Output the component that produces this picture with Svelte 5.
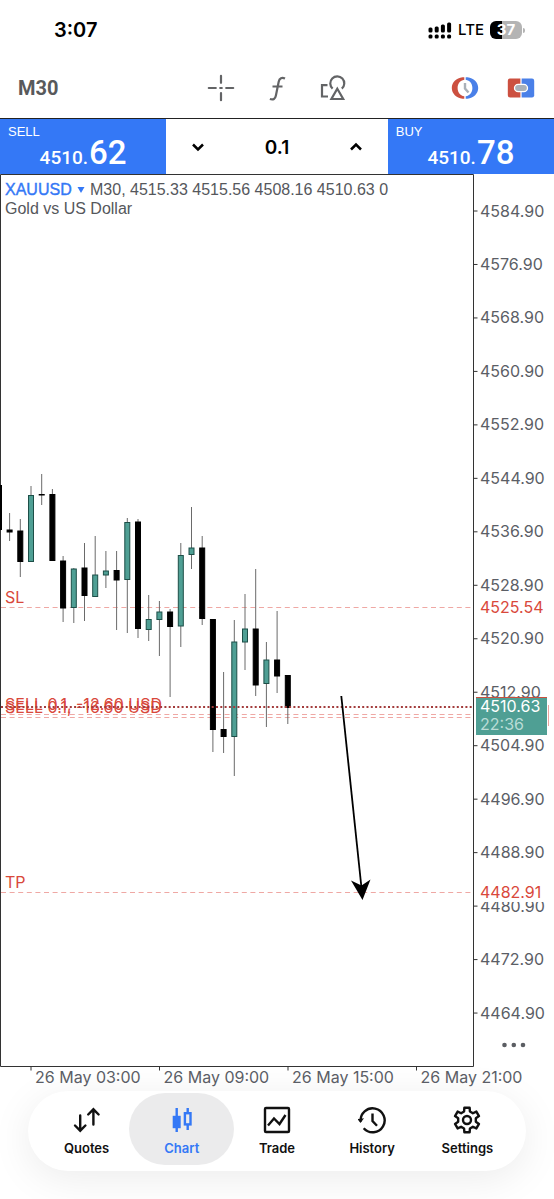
<script>
	const gear = gearPoints(14, 14, 12.6, 9);

	const tabs = [
		{ id: 'quotes', label: 'Quotes' },
		{ id: 'chart', label: 'Chart' },
		{ id: 'trade', label: 'Trade' },
		{ id: 'history', label: 'History' },
		{ id: 'settings', label: 'Settings' }
	];

	let active = $state('chart');
	let volume = $state('0.1');

	function step(delta) {
		const next = Math.max(0.1, (parseFloat(volume) || 0) + delta);
		volume = next.toFixed(1);
	}

	// plot geometry, in viewBox units
	const plot = { right: 473.5, bottom: 1066.5 };
	const firstPrice = 4584.9;
	const priceStep = 8;
	const rowHeight = 53.47;
	const prices = Array.from({ length: 16 }, (_, i) => ({
		y: 211 + i * rowHeight,
		text: (firstPrice - i * priceStep).toFixed(2)
	}));

	const times = [
		{ x: 31, text: '26 May 03:00' },
		{ x: 159.5, text: '26 May 09:00' },
		{ x: 288, text: '26 May 15:00' },
		{ x: 416.5, text: '26 May 21:00' }
	];

	// [wick top, wick bottom, body top, body bottom, rising]
	const candles = [
		[513, 541, 530, 532, 0],
		[519, 577, 531, 561.5, 0],
		[486, 562, 495.5, 561.5, 1],
		[474, 505, 494.5, 495, 0],
		[489, 561, 494.5, 560.5, 0],
		[556, 622, 561, 608, 0],
		[568, 623, 569, 607.5, 1],
		[543, 621, 568, 595.5, 0],
		[536, 597, 575, 596.5, 1],
		[551, 588, 571, 575, 1],
		[551, 630, 570.5, 580, 0],
		[518, 633, 522.5, 579.5, 1],
		[519, 638, 522, 628.5, 0],
		[595, 641, 619.5, 629.5, 1],
		[601, 656, 612, 619.5, 1],
		[609, 697, 612, 626.5, 0],
		[543, 647, 555.5, 626, 1],
		[507, 569, 548, 554.5, 1],
		[536, 625, 548, 618.5, 0],
		[619, 752, 619.5, 729.5, 0],
		[672, 753, 729.5, 736.5, 0],
		[620, 776, 642, 736.5, 1],
		[594, 670, 629, 642, 1],
		[569, 696, 629, 685, 0],
		[642, 727, 660, 683.5, 1],
		[611, 693, 660, 676, 0],
		[675, 724, 675.5, 707.5, 0]
	];
	const candleX = (i) => 9.6 + i * 10.7;

	function gearPoints(cx, cy, outer, inner) {
		const pts = [];
		for (let i = 0; i < 6; i++) {
			const mid = -90 + i * 60;
			for (const [off, r] of [[-19, inner], [-12, outer], [12, outer], [19, inner]]) {
				const a = ((mid + off) * Math.PI) / 180;
				pts.push(`${(cx + r * Math.cos(a)).toFixed(2)},${(cy + r * Math.sin(a)).toFixed(2)}`);
			}
		}
		return pts.join(' ');
	}
</script>

<div class="app">
	<header class="status">
		<span class="clock">3:07</span>
		<div class="radios">
			<svg class="signal" viewBox="0 0 24 18" aria-hidden="true">
				<rect x="0.5" y="6.5" width="4" height="5" rx="1.5" />
				<rect x="6.7" y="5.5" width="4" height="6" rx="1.5" />
				<rect x="12.9" y="3.5" width="4" height="8" rx="1.5" />
				<rect x="19.1" y="1.5" width="4" height="10" rx="1.5" />
				<rect x="0.5" y="13.5" width="4" height="4" rx="1.5" />
				<rect x="6.7" y="13.5" width="4" height="4" rx="1.5" />
				<rect x="12.9" y="13.5" width="4" height="4" rx="1.5" />
				<rect x="19.1" y="13.5" width="4" height="4" rx="1.5" />
			</svg>
			<span class="lte">LTE</span>
			<span class="battery"><span class="cell">37</span></span>
		</div>
	</header>

	<div class="toolbar">
		<button class="timeframe">M30</button>
		<div class="tools">
			<button aria-label="Crosshair">
				<svg viewBox="0 0 28 28" class="line">
					<path d="M14 1.8v7M14 19.200v7M1.800 14h7M19.200 14h7M13.200 14h1.600" stroke-linecap="round" />
				</svg>
			</button>
			<button aria-label="Indicators">
				<svg viewBox="0 0 28 28" class="line">
					<path d="M22 4.500c-3-1.400-5.600-.4-6.300 3.200L12.900 21.500c-.6 3.300-2.600 4.700-6 3.500M9.500 12.500h10" />
				</svg>
			</button>
			<button aria-label="Objects">
				<svg viewBox="0 0 28 28" class="line">
					<path d="M8.500 11.200H3v11.300h6" />
					<path d="M13.600 14.600A7 7 0 1 1 22.800 14.700" />
					<path d="M18.300 14.800L24.200 25H12.400z" />
				</svg>
			</button>
		</div>
		<div class="actions">
			<button aria-label="Sessions">
				<svg viewBox="0 0 28 28">
					<path fill="#cc5040" d="M13.300 3.300H11.500C5.300 4 .8 8.500 .8 14s4.500 10 10.700 10.700h1.800v-2.400C9 21.500 6.600 18.300 6.600 14S9 6.500 13.300 5.700z" />
					<path fill="#4a80e8" d="M14.700 3.300h1.800C22.700 4 27.200 8.500 27.200 14s-4.500 10-10.700 10.700h-1.800v-2.400C19 21.500 21.400 18.300 21.400 14S19 6.500 14.700 5.700z" />
					<path d="M14 9v5.500l3.500 4" fill="none" stroke="#a9b0b8" stroke-width="2.400" />
				</svg>
			</button>
			<button aria-label="One click trading">
				<svg viewBox="0 0 28 28">
					<path fill="#cc5040" d="M13.400 4.600H3a2.200 2.200 0 0 0-2.200 2.200v14.400A2.200 2.200 0 0 0 3 23.400h10.400z" />
					<path fill="#4a80e8" d="M14.600 4.600H25a2.200 2.200 0 0 1 2.200 2.200v14.400a2.200 2.200 0 0 1-2.200 2.200H14.600z" />
					<rect x="7.500" y="10.300" width="13" height="7.400" rx="3.700" fill="#a9b0b8" stroke="#fff" stroke-width="1.300" />
				</svg>
			</button>
		</div>
	</div>

	<div class="panel">
		<button class="deal">
			<span class="side">SELL</span>
			<span class="quote">4510.<b>62</b></span>
		</button>
		<div class="volume">
			<button aria-label="Decrease volume" onclick={() => step(-0.1)}>
				<svg viewBox="0 0 14 14"><path d="M2 4.500l5 5 5-5" /></svg>
			</button>
			<input aria-label="Volume" inputmode="decimal" bind:value={volume} />
			<button aria-label="Increase volume" onclick={() => step(0.1)}>
				<svg viewBox="0 0 14 14"><path d="M2 9.500l5-5 5 5" /></svg>
			</button>
		</div>
		<button class="deal">
			<span class="side">BUY</span>
			<span class="quote">4510.<b>78</b></span>
		</button>
	</div>

	<main>
		<svg class="chart" viewBox="0 174 554 917" role="img" aria-label="XAUUSD M30 chart">
			<!-- frame -->
			<path class="frame" d="M0.500 174.500V1066.500H473.500V174.500z" />

			<text class="title symbol" x="5" y="195">XAUUSD</text>
			<path d="M77.500 187h7l-3.500 6z" fill="#3478f6" />
			<text class="title" x="90" y="195">M30, 4515.33 4515.56 4508.16 4510.63 0</text>
			<text class="title" x="5" y="214">Gold vs US Dollar</text>

			<!-- order levels -->
			<path class="level" d="M1 607.500H473M1 714.500H473M1 717.500H473M1 892.500H473" />

			<!-- candles -->
			<rect x="0" y="485" width="2" height="45" />
			{#each candles as [high, low, top, bottom, up], i}
				<line class="wick" x1={candleX(i)} x2={candleX(i)} y1={high} y2={low} />
				<rect
					class="body"
					class:up
					x={candleX(i) - 2.5}
					y={top}
					width="5"
					height={bottom - top}
				/>
			{/each}

			<text class="order" x="5" y="603">SL</text>
			<text class="order" x="5" y="888">TP</text>
			<text class="order" x="5" y="710">SELL 0.1, -12.60 USD</text>
			<text class="order" x="5" y="713">SELL 0.1, -16.60 USD</text>
			<path class="bid" d="M1 707H473" />

			<!-- price scale -->
			{#each prices as p}
				<line class="tick" x1={plot.right} x2={plot.right + 4} y1={p.y} y2={p.y} />
				<text class="scale" x="480" y={p.y + 5.5}>{p.text}</text>
			{/each}
			<rect x="479" y="600" width="75" height="15" fill="#fff" />
			<text class="scale stop" x="480" y="613">4525.54</text>
			<rect x="479" y="886" width="75" height="16" fill="#fff" />
			<text class="scale stop" x="480" y="898">4482.91</text>
			<path d="M548.500 705V726" stroke="#eda49e" />
			<rect x="476" y="697" width="71" height="38" fill="#4f9f94" />
			<path d="M476 697.500H547" stroke="#c9503f" />
			<text class="scale now" x="480" y="712">4510.63</text>
			<text class="scale left" x="480" y="730">22:36</text>

			<!-- time scale -->
			{#each times as t}
				<line class="tick" x1={t.x} x2={t.x} y1={plot.bottom} y2={plot.bottom + 4} />
				<text class="scale" x={t.x + 4} y="1083">{t.text}</text>
			{/each}

			<!-- drawn arrow -->
			<path d="M341.300 696L361.500 888" stroke="#000" stroke-width="1.800" />
			<path d="M351 880.500l10.500 5 9-6L362.500 900z" />

			<g fill="#5b5e63">
				<circle cx="504.500" cy="1045" r="2.300" />
				<circle cx="513.800" cy="1045" r="2.300" />
				<circle cx="523" cy="1045" r="2.300" />
			</g>
		</svg>
	</main>

	<nav>
		{#each tabs as tab}
			<button class:active={active === tab.id} onclick={() => (active = tab.id)}>
				<svg viewBox="0 0 28 28" aria-hidden="true">
					{#if tab.id === 'quotes'}
						<path d="M7.200 9.500V24M2 19.500l5.200 5.200 5.200-5.200M20.400 18.500V4M15.200 8.500l5.200-5.200 5.200 5.200" stroke-linecap="round" />
					{:else if tab.id === 'chart'}
						<path d="M8.700 2v24M19.700 2v5M19.700 19v5" />
						<rect x="5.900" y="11" width="5.600" height="10" class="solid" />
						<rect x="16.900" y="7.200" width="5.600" height="11.200" />
					{:else if tab.id === 'trade'}
						<rect x="2" y="2" width="24" height="24" rx="1" />
						<path d="M5 19.500l6-7 5.500 5.500 6-9" />
					{:else if tab.id === 'history'}
						<path d="M2.700 15.500A12 12 0 1 1 5.700 22.300" />
						<path d="M-.5 13l6.500-.8-3.500 4.800z" class="solid" stroke="none" />
						<path d="M14.500 7.500v7.500l4.500 4.800" />
					{:else}
						<polygon points={gear} stroke-linejoin="round" />
						<circle cx="14" cy="14" r="4" />
					{/if}
				</svg>
				<span>{tab.label}</span>
			</button>
		{/each}
	</nav>
</div>

<style>
	:global(body) {
		margin: 0;
		background: #fff;
		color: #000;
		font-family: Inter, 'Liberation Sans', sans-serif;
	}

	.app {
		min-height: 100vh;
		overflow: hidden;
	}

	button {
		margin: 0;
		padding: 0;
		border: 0;
		background: none;
		color: inherit;
		font: inherit;
		cursor: pointer;
	}

	.status {
		display: flex;
		justify-content: space-between;
		align-items: center;
		height: 60px;
		padding: 0 29px 0 54px;
	}
	.clock {
		font-size: 20px;
		font-weight: 600;
	}
	.radios {
		display: flex;
		align-items: center;
		gap: 6px;
	}
	.signal {
		width: 24px;
		height: 18px;
	}
	.lte {
		font-size: 15px;
		font-weight: 500;
		line-height: 18px;
	}
	.battery {
		display: flex;
		align-items: center;
		gap: 1px;
	}
	.battery::after {
		content: '';
		width: 2px;
		height: 5px;
		border-radius: 0 2px 2px 0;
		background: #b4b4b4;
	}
	.cell {
		width: 32px;
		border-radius: 6px;
		background: linear-gradient(to right, #000 37%, #b4b4b4 37%);
		color: #fff;
		font-size: 15px;
		font-weight: 700;
		line-height: 18px;
		text-align: center;
	}

	.toolbar {
		display: grid;
		grid-template-columns: 1fr auto 1fr;
		align-items: center;
		height: 58px;
		padding: 0 19px 2px 18px;
		box-sizing: border-box;
		color: #58595b;
	}
	.toolbar svg {
		display: block;
		width: 28px;
		height: 28px;
	}
	.line {
		fill: none;
		stroke: #636466;
		stroke-width: 2.2;
	}
	.timeframe {
		justify-self: start;
		font-family: Roboto, sans-serif;
		font-size: 20px;
		font-weight: 700;
	}
	.tools,
	.actions {
		display: flex;
		gap: 28px;
	}
	.actions {
		justify-self: end;
	}

	.panel {
		display: grid;
		grid-template-columns: 3fr 4fr 3fr;
		height: 56px;
		box-sizing: border-box;
		border-top: 1px solid #222;
	}
	.deal {
		display: flex;
		flex-direction: column;
		padding: 5px 8px 0;
		background: #3478f6;
		color: #fff;
		text-align: left;
	}
	.side {
		font: 13px/15px 'Liberation Sans', sans-serif;
	}
	.quote {
		align-self: center;
		font-family: Roboto, sans-serif;
		font-size: 19px;
		font-weight: 500;
		line-height: 28px;
	}
	.quote b {
		margin-left: 1px;
		font-size: 33px;
		font-weight: 500;
	}
	.volume {
		display: flex;
		justify-content: space-between;
		align-items: center;
		padding: 0 25px;
	}
	.volume svg {
		display: block;
		width: 14px;
		height: 14px;
		fill: none;
		stroke: #000;
		stroke-width: 2.5;
	}
	.volume input {
		width: 60px;
		padding: 2px 0 0;
		border: 0;
		background: none;
		color: #000;
		font: 600 19px/24px Inter, sans-serif;
		text-align: center;
	}

	.chart {
		display: block;
		width: 100%;
		height: auto;
	}
	.frame {
		fill: none;
		stroke: #333;
	}
	.title {
		fill: #55575c;
		font: 16px 'Liberation Sans', Arial, sans-serif;
	}
	.symbol {
		fill: #3478f6;
		stroke: #3478f6;
		stroke-width: 0.4;
	}
	.scale {
		fill: #5b5e66;
		font: 16px Inter, sans-serif;
	}
	.stop {
		fill: #d9483b;
	}
	.now {
		fill: #fff;
	}
	.left {
		fill: #b9dcd6;
	}
	.order {
		fill: #d9483b;
		font: 16px Inter, sans-serif;
	}
	.level {
		fill: none;
		stroke: #efa8a4;
		stroke-dasharray: 5 3.6;
	}
	.bid {
		fill: none;
		stroke: #a33c3c;
		stroke-width: 2;
		stroke-dasharray: 2 2.3;
	}
	.tick {
		stroke: #333;
	}
	.wick {
		stroke: #6a6a6a;
	}
	.body {
		fill: #000;
		stroke: #000;
	}
	.body.up {
		fill: #4f9f94;
		stroke: #1d4f48;
	}

	nav {
		display: grid;
		grid-template-columns: repeat(5, 1fr);
		margin: 0 28px 28px;
		padding: 2px 11px 6px;
		border-radius: 40px;
		background: #fff;
		box-shadow: 0 8px 40px rgba(0, 0, 0, 0.08);
	}
	nav button {
		display: flex;
		flex-direction: column;
		align-items: center;
		gap: 6px;
		height: 72px;
		margin: 0 -5px;
		padding-top: 13px;
		border-radius: 36px;
		box-sizing: border-box;
		color: #111;
		font-size: 13px;
		font-weight: 600;
		line-height: 16px;
	}
	nav svg {
		width: 28px;
		height: 28px;
		fill: none;
		stroke: currentColor;
		stroke-width: 2.4;
	}
	nav .solid {
		fill: currentColor;
	}
	nav .active {
		background: #ebebec;
		color: #3478f6;
	}
</style>
